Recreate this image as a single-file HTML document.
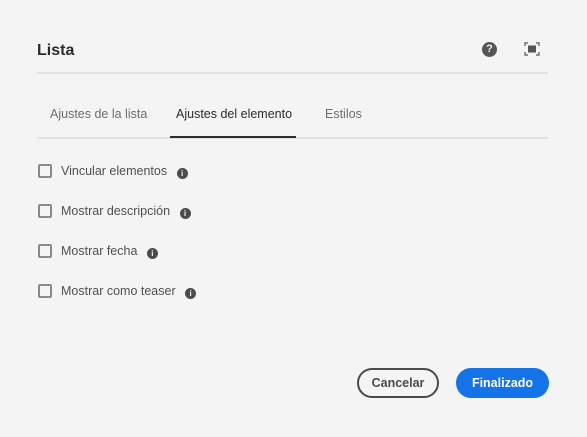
<!DOCTYPE html>
<html><head><style>
body{margin:0;width:587px;height:437px;background:#f4f4f4;font-family:"Liberation Sans",sans-serif;position:relative;overflow:hidden}
.a{position:absolute}
.t{font-size:16px;color:#2c2c2c;left:37px;top:42px;font-weight:bold}
.line{height:2px;background:#e1e1e1}
.tab{font-size:12.5px;top:107px;color:#6e6e6e}
.cb{left:38px;width:10px;height:10px;border:2px solid #8a8a8a;border-radius:2px}
.lb{left:61px;font-size:12.5px;color:#505050}
.i{width:11px;height:11px;border-radius:50%;background:#4b4b4b;color:#f4f4f4;font-size:8px;font-weight:bold;text-align:center;line-height:11px;vertical-align:-1px}
.btn{top:368px;height:26px;border-radius:15px;font-size:12.5px;font-weight:bold;text-align:center;line-height:26px}
</style></head><body>
<div class="a t">Lista</div>
<div class="a" style="left:482px;top:42px;width:15px;height:15px;border-radius:50%;background:#555;color:#f4f4f4;font-size:11px;font-weight:bold;text-align:center;line-height:15px">?</div>
<svg class="a" style="left:524px;top:42px" width="16" height="14"><path d="M1 4V1h3M12 1h3v3M15 10v3h-3M4 13H1v-3" fill="none" stroke="#555" stroke-width="1.2"/><rect x="4" y="3.5" width="8" height="7" fill="#555"/></svg>
<div class="a line" style="left:37px;top:72px;width:511px"></div>
<div class="a tab" style="left:50px">Ajustes de la lista</div>
<div class="a tab" style="left:176px;color:#2c2c2c">Ajustes del elemento</div>
<div class="a tab" style="left:325px">Estilos</div>
<div class="a line" style="left:37px;top:137px;width:511px"></div>
<div class="a" style="left:170px;top:136px;width:126px;height:2px;background:#2c2c2c"></div>

<div class="a cb" style="top:164px"></div><div class="a lb" style="top:164px">Vincular elementos <span class="i" style="display:inline-block;margin-left:6px">i</span></div>
<div class="a cb" style="top:204px"></div><div class="a lb" style="top:204px">Mostrar descripción <span class="i" style="display:inline-block;margin-left:6px">i</span></div>
<div class="a cb" style="top:244px"></div><div class="a lb" style="top:244px">Mostrar fecha <span class="i" style="display:inline-block;margin-left:6px">i</span></div>
<div class="a cb" style="top:284px"></div><div class="a lb" style="top:284px">Mostrar como teaser <span class="i" style="display:inline-block;margin-left:6px">i</span></div>

<div class="a btn" style="left:357px;width:78px;border:2px solid #4b4b4b;color:#4b4b4b">Cancelar</div>
<div class="a btn" style="left:456px;width:93px;height:30px;line-height:30px;background:#1473e6;color:#fff">Finalizado</div>
</body></html>
